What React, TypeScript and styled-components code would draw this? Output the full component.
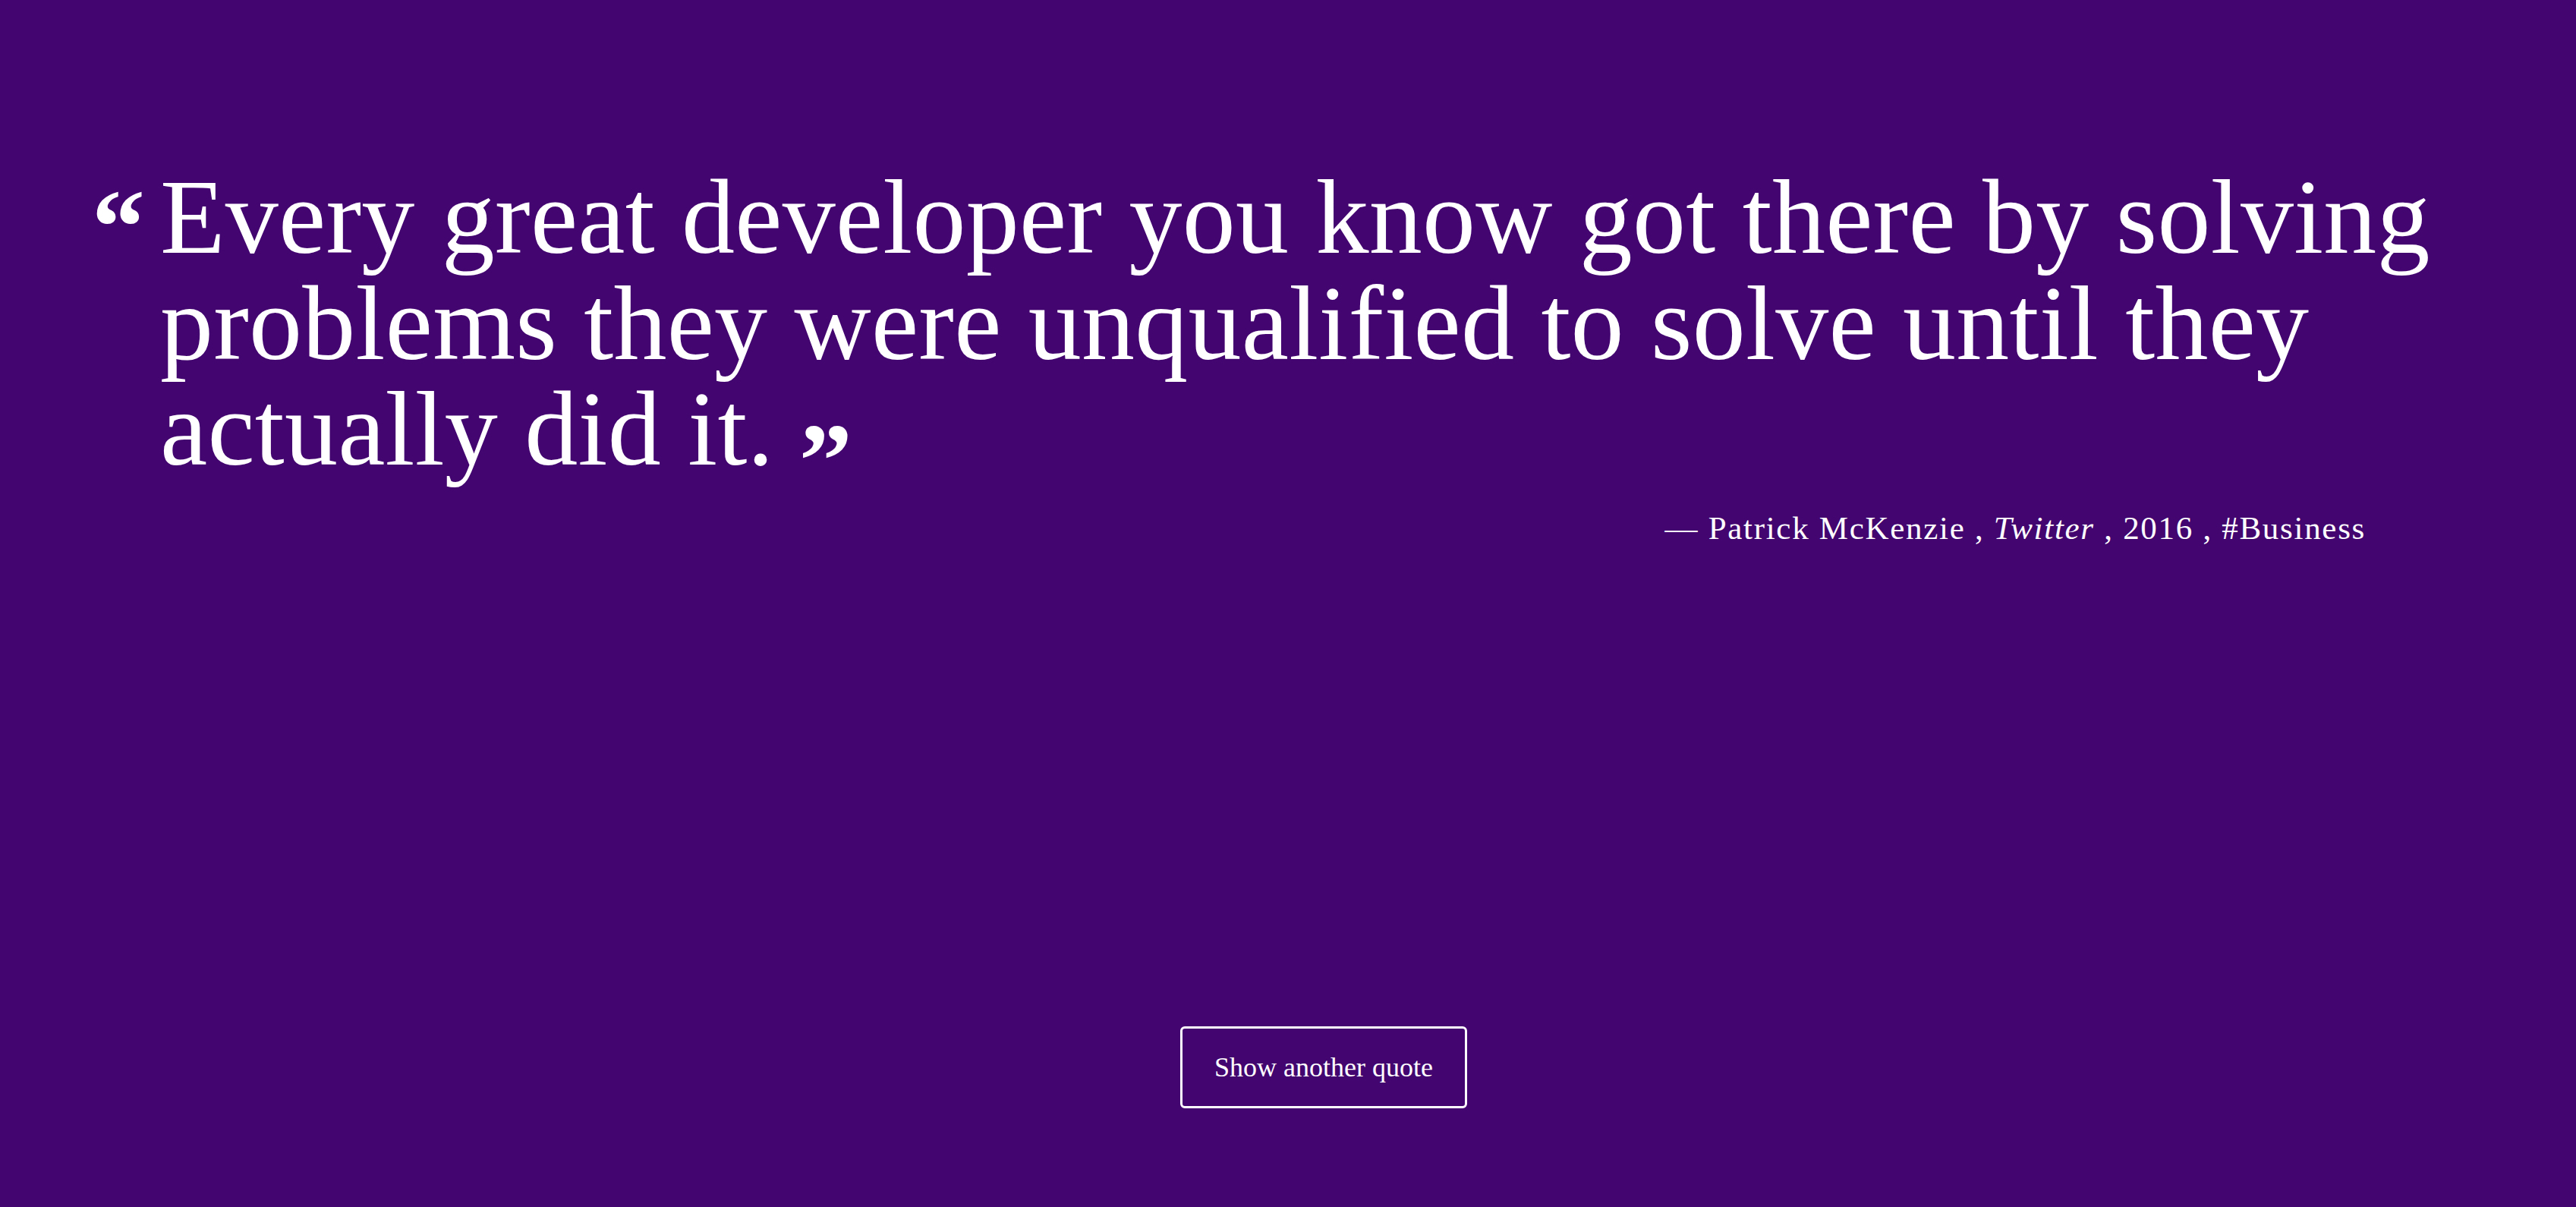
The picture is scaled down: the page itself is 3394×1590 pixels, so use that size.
import React from "react";
import styled, { createGlobalStyle } from "styled-components";

const GlobalStyle = createGlobalStyle`
  html, body {
    margin: 0;
    padding: 0;
    background: #430670;
  }
  * { box-sizing: border-box; }
`;

const Page = styled.main`
  min-height: 100vh;
  display: flex;
  flex-direction: column;
  padding: 216px 27px 130px 121px;
  background: #430670;
  color: #ffffff;
  font-family: "Liberation Serif", "Times New Roman", serif;
`;

const QuoteBlock = styled.blockquote`
  margin: 0;
  display: flex;
  align-items: flex-start;
  gap: 20px;
`;

const Mark = styled.span<{ $closing?: boolean }>`
  font-family: "Liberation Serif", serif;
  font-weight: 700;
  font-size: 140px;
  letter-spacing: 0;
  line-height: ${(p) => (p.$closing ? 0 : 1)};
  vertical-align: ${(p) => (p.$closing ? "-42px" : "baseline")};
  margin-top: ${(p) => (p.$closing ? 0 : "13px")};
  margin-left: ${(p) => (p.$closing ? "33px" : 0)};
  flex: none;
`;

const QuoteText = styled.p`
  margin: 0;
  flex: 1;
  font-size: 140px;
  line-height: 139.5px;
  letter-spacing: 0.25px;
  font-weight: 400;
`;

const Attribution = styled.footer`
  margin: 36px 250px 0 0;
  text-align: right;
  font-size: 43px;
  letter-spacing: 1.7px;
  line-height: 1.15;
`;

const Source = styled.cite`
  font-style: italic;
`;

const ButtonRow = styled.div`
  margin-top: auto;
  display: flex;
  justify-content: center;
`;

const NextButton = styled.button`
  font-family: "Liberation Serif", serif;
  font-size: 36px;
  color: #ffffff;
  background: transparent;
  border: 3px solid #ffffff;
  border-radius: 6px;
  padding: 30px 42px;
  line-height: normal;
  cursor: pointer;
`;

const quoteHead =
  "Every great developer you know got there by solving problems they were unqualified to solve until they ";
const quoteTail = "actually did it.";

export default function App() {
  return (
    <>
      <GlobalStyle />
      <Page>
        <QuoteBlock>
          <Mark>“</Mark>
          <QuoteText>
            {quoteHead}
            {quoteTail}
            <Mark $closing>”</Mark>
          </QuoteText>
        </QuoteBlock>
        <Attribution>
          — Patrick McKenzie , <Source>Twitter</Source> , 2016 , #Business
        </Attribution>
        <ButtonRow>
          <NextButton type="button">Show another quote</NextButton>
        </ButtonRow>
      </Page>
    </>
  );
}
